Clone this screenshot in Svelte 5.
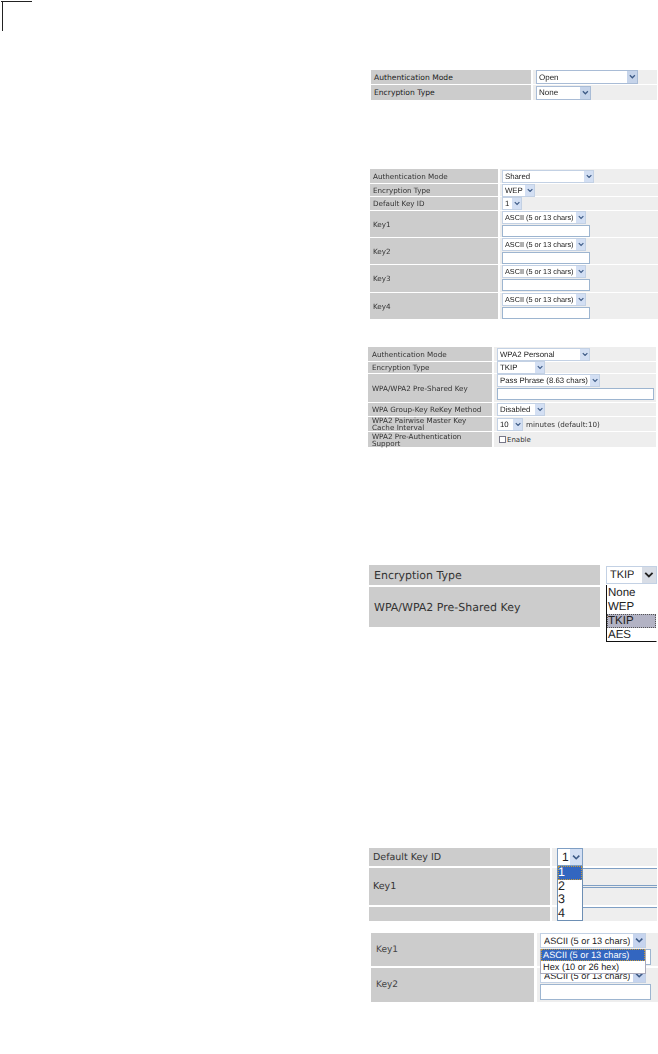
<script>
  const key = 'ASCII (5 or 13 chars)';
  const keyRows = ['Key1', 'Key2', 'Key3', 'Key4'];
</script>

{#snippet sel(text, cls = '')}
  <div class="sel {cls}"><span class="txt">{text}</span><span class="arrow"><svg viewBox="0 0 8 6" aria-hidden="true"><path d="M1 1.5 4 4.5 7 1.5" /></svg></span></div>
{/snippet}

<main class="page">
  <span class="crop-h"></span>
  <span class="crop-v"></span>

  <section class="fig f1">
    <div class="lab">Authentication Mode</div>
    <div class="val">{@render sel('Open', 'w102')}</div>
    <div class="lab">Encryption Type</div>
    <div class="val">{@render sel('None', 'w55')}</div>
  </section>

  <section class="fig f2">
    <div class="lab">Authentication Mode</div>
    <div class="val">{@render sel('Shared', 'w92')}</div>
    <div class="lab">Encryption Type</div>
    <div class="val">{@render sel('WEP', 'w33')}</div>
    <div class="lab">Default Key ID</div>
    <div class="val">{@render sel('1', 'w20')}</div>
    {#each keyRows as k}
      <div class="lab">{k}</div>
      <div class="val stack">{@render sel(key, 'w84 small')}<div class="input w88"></div></div>
    {/each}
  </section>

  <section class="fig f3">
    <div class="lab">Authentication Mode</div>
    <div class="val">{@render sel('WPA2 Personal', 'w93')}</div>
    <div class="lab">Encryption Type</div>
    <div class="val">{@render sel('TKIP', 'w48')}</div>
    <div class="lab">WPA/WPA2 Pre-Shared Key</div>
    <div class="val stack">{@render sel('Pass Phrase (8.63 chars)', 'w103')}<div class="input w157"></div></div>
    <div class="lab">WPA Group-Key ReKey Method</div>
    <div class="val">{@render sel('Disabled', 'w48')}</div>
    <div class="lab tight">WPA2 Pairwise Master Key Cache Interval</div>
    <div class="val">{@render sel('10', 'w26')}<span class="note">minutes (default:10)</span></div>
    <div class="lab tight">WPA2 Pre-Authentication Support</div>
    <div class="val"><span class="check"></span><span class="enable">Enable</span></div>
  </section>

  <section class="fig f4">
    <div class="lab">Encryption Type</div>
    <div class="val">
      {@render sel('TKIP', 'w51')}
      <div class="menu">
        <div>None</div>
        <div>WEP</div>
        <div class="picked">TKIP</div>
        <div>AES</div>
      </div>
    </div>
    <div class="lab">WPA/WPA2 Pre-Shared Key</div>
    <div class="val"></div>
  </section>

  <section class="fig f5">
    <div class="lab">Default Key ID</div>
    <div class="val">
      {@render sel('1', 'w26')}
      <div class="menu">
        <div class="active">1</div>
        <div>2</div>
        <div>3</div>
        <div>4</div>
      </div>
    </div>
    <div class="lab">Key1</div>
    <div class="val lines"><i></i><i></i><i></i></div>
    <div class="lab"></div>
    <div class="val lines"><i></i></div>
  </section>

  <section class="fig f6">
    <div class="lab">Key1</div>
    <div class="val stack">
      {@render sel(key, 'w106')}
      <div class="input w111"></div>
      <div class="menu">
        <div class="active">{key}</div>
        <div>Hex (10 or 26 hex)</div>
      </div>
    </div>
    <div class="lab">Key2</div>
    <div class="val stack">
      {@render sel(key, 'w106')}
      <div class="input w111"></div>
    </div>
  </section>
</main>

<style>
  :global(body) { background: #fff; }
  .page {
    position: relative;
    width: 658px;
    height: 1054px;
    overflow: hidden;
    background: #fff;
    padding-top: 70px;
    box-sizing: border-box;
    font-family: "DejaVu Sans", sans-serif;
    color: #333;
    text-rendering: geometricPrecision;
  }
  .crop-h { position: absolute; left: 1px; top: 1px; width: 31px; height: 1px; background: #222; }
  .crop-v { position: absolute; left: 2px; top: 1px; width: 1px; height: 30px; background: #222; }

  .fig { display: grid; gap: 1px 2px; filter: blur(0.4px); }
  .lab { background: #ccc; display: flex; align-items: center; padding-left: 3px; white-space: nowrap; min-width: 0; }
  .lab.tight { white-space: normal; line-height: 7px; font-size: 7.2px; padding-right: 20px; }
  .val { position: relative; background: #eee; display: flex; align-items: center; padding-left: 3px; min-width: 0; }
  .val.stack { flex-direction: column; align-items: flex-start; justify-content: flex-start; gap: 1px; }

  .sel {
    display: flex; align-items: center; justify-content: space-between; box-sizing: border-box;
    height: 13px; flex: none; background: #fff; border: 1px solid #c3d1e4; font-family: "Liberation Sans", sans-serif;
    font-size: 7.8px; padding-left: 2px; color: #222;
  }
  .txt { white-space: nowrap; overflow: hidden; }
  .arrow { flex: none; height: 100%; aspect-ratio: 4 / 5; background: #d3dff3; display: flex; align-items: center; justify-content: center; }
  .arrow svg { width: 70%; fill: none; stroke: #3d5a86; stroke-width: 1.5; }
  .input { box-sizing: border-box; flex: none; height: 12px; background: #fff; border: 1px solid #9db5d0; }
  .small { font-size: 7.3px; }

  .w20 { width: 20px; } .w26 { width: 26px; } .w33 { width: 33px; } .w48 { width: 48px; }
  .w51 { width: 51px; } .w55 { width: 55px; } .w84 { width: 84px; } .w88 { width: 88px; }
  .w92 { width: 92px; } .w93 { width: 93px; } .w102 { width: 102px; } .w103 { width: 103px; }
  .w106 { width: 106px; } .w111 { width: 111px; } .w157 { width: 157px; }

  .note { margin-left: 3px; font-size: 7.2px; color: #333; white-space: nowrap; }
  .check { width: 7px; height: 7px; margin-left: 2px; border: 1px solid #778; box-sizing: border-box; background: #fff; }
  .enable { margin-left: 1px; font-size: 7px; color: #333; }

  .f1 { margin-left: 371px; grid-template-columns: 160px 124px; grid-template-rows: 14px 15px; font-size: 7.6px; color: #222; }
  .f1 .sel { height: 14px; font-size: 8px; border-color: #a9bcd6; }
  .f1 .arrow { background: #c6d4ea; aspect-ratio: 4 / 5; }

  .f2 { margin-top: 69px; margin-left: 370px; grid-template-columns: 128px 158px; grid-template-rows: 14px 12px 13px 26px 26px 27px 26px; font-size: 7.2px; color: #333; }
  .f2 .val { padding-left: 2px; }

  .f3 { margin-top: 28px; margin-left: 368px; grid-template-columns: 124px 162px; grid-template-rows: 14px 11px 28px 13px 14px 15px; font-size: 7.2px; color: #333; }
  .f3 .lab { padding-left: 4px; }

  .f4 { margin-top: 118px; margin-left: 369px; grid-template-columns: 231px 55px; grid-template-rows: 20px 40px; gap: 2px 3px; font-size: 11px; filter: none; }
  .f4 .lab { padding-left: 5px; }
  .f4 .val { background: #fff; }
  .f4 .sel { height: 18px; font-size: 11px; border-color: #c3d1e4; padding-left: 3px; }
  .f4 .arrow { width: 14px; aspect-ratio: auto; background: #d8dde6; }
  .f4 .arrow svg { stroke: #222; }
  .f4 .menu {
    position: absolute; left: 3px; top: 20px; width: 51px; box-sizing: border-box; height: 57px; z-index: 2;
    background: #fff; border: 1px solid #111; border-top: 0; border-right-color: #fff;
    font: 11.5px/14px "Liberation Sans", sans-serif; color: #222; padding: 1px 0 0 1px;
  }
  .picked { background: #b3b3c4; outline: 1px dotted #555; outline-offset: -1px; margin-left: -1px; padding-left: 1px; }

  .f5 { margin-top: 221px; margin-left: 369px; grid-template-columns: 181px 105px; grid-template-rows: 18px 37px 14px; gap: 2px; font-size: 9.5px; filter: none; }
  .f5 .lab { padding-left: 4px; }
  .f5 .val { padding-left: 5px; }
  .f5 .sel { height: 18px; font-size: 12px; border-color: #7f9fc4; padding-left: 4px; }
  .f5 .sel .arrow { width: 12px; aspect-ratio: auto; }
  .f5 .menu {
    position: absolute; left: 5px; top: 18px; width: 26px; height: 55px; box-sizing: border-box; z-index: 2;
    background: #fff; border: 1px solid #6d8fb4; border-top: 0;
    font: 12.5px/13.5px "Liberation Sans", sans-serif; color: #222;
  }
  .active { background: #3366c0; color: #fff; outline: 1px dotted #c59a3a; outline-offset: -1px; }
  .lines { flex-direction: column; align-items: stretch; justify-content: flex-start; padding-left: 31px !important; }
  .lines i { display: block; height: 1px; background: #7f9fc4; }
  .f5 .lines i + i { margin-top: 16px; }
  .f5 .lines i + i + i { margin-top: 1px; }

  .f6 { margin-top: 12px; margin-left: 371px; grid-template-columns: 163px 123px; grid-template-rows: 33px 34px; gap: 2px 3px; font-size: 9px; color: #444; filter: none; }
  .f6 .lab { padding-left: 5px; }
  .f6 .val { gap: 1px; }
  .f6 .sel { height: 15px; font-size: 9.2px; padding-left: 3px; border-color: #c3d1e4; }
  .f6 .arrow { width: 12px; aspect-ratio: auto; background: #c6d4ee; }
  .f6 .input { height: 16px; }
  .f6 .menu {
    position: absolute; left: 3px; top: 16px; width: 106px; height: 25px; box-sizing: border-box; z-index: 2;
    background: #fff; border: 1px solid #aab; border-top: 0; font: 9.2px/12px "Liberation Sans", sans-serif; color: #222;
  }
  .f6 .menu div { padding-left: 2px; white-space: nowrap; }
</style>
